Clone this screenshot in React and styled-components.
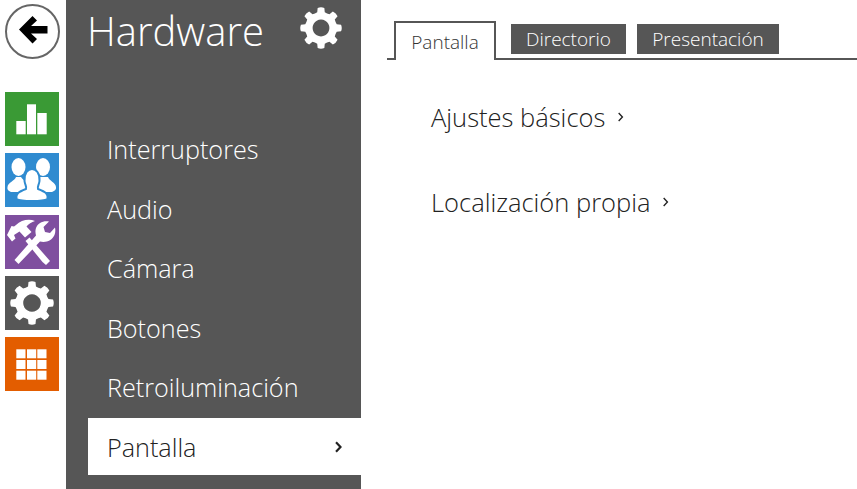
import React from 'react';
import styled, { createGlobalStyle } from 'styled-components';

const Global = createGlobalStyle`
  html, body { margin: 0; padding: 0; background: #fff; overflow: hidden; }
  body { font-family: "Open Sans", "Noto Sans", sans-serif; font-weight: 300; color: #222; }
`;

const Page = styled.div`
  display: flex;
  width: 857px;
  height: 489px;
`;
const Rail = styled.nav`
  width: 66px;
  flex: none;
  display: flex;
  flex-direction: column;
  padding: 4px 0 0 5px;
  box-sizing: border-box;
`;
const BackButton = styled.button`
  width: 55px;
  height: 55px;
  padding: 0;
  border: 2px solid #666;
  border-radius: 50%;
  background: #fff;
  display: flex;
  align-items: center;
  justify-content: center;
  box-sizing: border-box;
  margin-bottom: 33px;
`;
const Tile = styled.div`
  width: 54px;
  height: 54px;
  background: ${p => p.$bg};
  margin-bottom: 7.3px;
  & > svg { display: block; }
`;
const Sidebar = styled.aside`
  width: 295px;
  height: 489px;
  flex: none;
  background: #565656;
  display: flex;
  flex-direction: column;
  padding-left: 22px;
  box-sizing: border-box;
`;
const SideHead = styled.div`
  height: 119.5px;
  display: flex;
  align-items: flex-start;
  justify-content: space-between;
  padding: 4px 19px 0 0;
  box-sizing: border-box;
  color: #fff;
  & > svg { margin-top: 3px; }
`;
const SideTitle = styled.h1`
  margin: 0;
  font-size: 40px;
  line-height: 54px;
  font-weight: 300;
  margin-left: -1px;
`;
const NavList = styled.div`
  display: flex;
  flex-direction: column;
`;
const NavItem = styled.div`
  height: 59.5px;
  display: flex;
  align-items: center;
  justify-content: space-between;
  padding: 0 19px 0 19px;
  font-size: 25.2px;
  color: #fff;
  box-sizing: border-box;
`;
const ActiveItem = styled(NavItem)`
  height: 57px;
  margin-top: 1px;
  background: #fff;
  color: #222;
`;
const Main = styled.main`
  flex: 1;
  padding: 21px 0 0 26px;
  display: flex;
  flex-direction: column;
`;
const TabBar = styled.div`
  display: flex;
  align-items: flex-start;
  border-bottom: 2px solid #565656;
  padding-left: 7px;
  height: 37px;
`;
const ActiveTab = styled.div`
  width: 102px;
  height: 39px;
  box-sizing: border-box;
  border: 2px solid #565656;
  border-bottom: none;
  background: #fff;
  font-size: 19px;
  display: flex;
  align-items: center;
  justify-content: center;
  color: #333;
  margin-right: 15px;
`;
const Tab = styled.div`
  width: ${p => p.$w}px;
  height: 30px;
  margin: 3px ${p => p.$gap || 0}px 0 0;
  background: #565656;
  color: #fff;
  font-size: 19px;
  display: flex;
  align-items: center;
  justify-content: center;
`;
const Links = styled.div`
  display: flex;
  flex-direction: column;
  padding: 34px 0 0 44px;
  gap: 39px;
`;
const LinkRow = styled.div`
  display: flex;
  align-items: center;
  gap: 12px;
  height: 46px;
  font-size: 25.5px;
  color: #222;
`;

const gearPath = (() => {
  const pts = [];
  const n = 8;
  for (let i = 0; i < n; i++) {
    const a = (i * 2 * Math.PI) / n - Math.PI / 2;
    const w = Math.PI / n;
    const p = (r, t) => `${(50 + r * Math.cos(t)).toFixed(2)} ${(50 + r * Math.sin(t)).toFixed(2)}`;
    pts.push(`${i ? 'L' : 'M'}${p(38.5, a - w * 0.6)}`);
    pts.push(`L${p(48.5, a - w * 0.42)}`);
    pts.push(`Q${p(51, a)} ${p(48.5, a + w * 0.42)}`);
    pts.push(`L${p(38.5, a + w * 0.6)}`);
    const mid = a + w;
    pts.push(`Q${p(37, mid)} ${p(38.5, a + w * 1.4)}`);
  }
  return pts.join(' ') + ' Z M50 30 a20 20 0 1 0 0.01 0 Z';
})();

const Gear = ({ size }) => (
  <svg width={size} height={size} viewBox="0 0 100 100">
    <path d={gearPath} fill="#fff" fillRule="evenodd" />
  </svg>
);

const Chevron = ({ color = '#222', w = 1.6, h = 11 }) => (
  <svg width={h * 0.7} height={h} viewBox="0 0 7 11">
    <path d="M1.5 1.2 L5.6 5.5 L1.5 9.8" fill="none" stroke={color} strokeWidth={w} />
  </svg>
);

const items = ['Interruptores', 'Audio', 'Cámara', 'Botones', 'Retroiluminación'];

export default function App() {
  return (
    <Page>
      <Global />
      <Rail>
        <BackButton aria-label="Atrás">
          <svg width="51" height="51" viewBox="0 0 51 51">
            <path d="M12 23.500 L25.500 10 L30 14.500 L24 20 H40.500 V27.500 H24 L30 33 L25.500 37.500 Z" fill="#000" />
          </svg>
        </BackButton>
        <Tile $bg="#3a9a35">
          <svg width="54" height="54" viewBox="0 0 54 54" fill="#fff">
            <rect x="11.3" y="29" width="9.4" height="13.3" />
            <rect x="22" y="12.3" width="9" height="30" />
            <rect x="32.3" y="21" width="9.4" height="21.3" />
          </svg>
        </Tile>
        <Tile $bg="#2f8bd0">
          <svg width="54" height="54" viewBox="0 0 54 54">
            <g fill="#fff">
              <ellipse cx="13.5" cy="14" rx="7" ry="9" />
              <path d="M2.5 34 C3 29 10 28 11 24 H16 C18 28 24 29 25 33 L14 39 H6 C3 38 2 36 2.5 34 Z" />
              <ellipse cx="38" cy="14" rx="7" ry="9" />
              <path d="M51 34 C50.500 29 44 28 43 24 H35 C34 28 29 29 28 33 L39 39 H47 C50 38 51.500 36 51 34 Z" />
            </g>
            <g fill="#fff" stroke="#2f8bd0" strokeWidth="2">
              <path d="M11.500 46 C10.500 41 13 39 21 36 C22 34 20 32 19.500 28 C19 20 23 16 27 16 C31 16 35 20 34.500 28 C34 32 32 34 33 36 C41 39 43.500 41 42.500 46 C38 48.500 16 48.500 11.500 46 Z" />
            </g>
          </svg>
        </Tile>
        <Tile $bg="#7f4f9f">
          <svg width="54" height="54" viewBox="0 0 54 54" fill="#fff">
            <path d="M37.500 47 L41 50 L45 46 L24.500 22.500 L20.500 26 Z" />
            <path d="M2 20 L7 26.500 L10.500 23.500 L9 20 L14.500 16.500 L20 22.500 L26.500 17 L21.500 11.500 C23.500 9 26.500 7 30 6 C24 3.500 16 5 11 10 L9 11.500 L6.500 11 Z" />
            <path d="M9.500 45 L13.500 49 L35 26.500 C41 28 47 25.500 49.500 20 C50.500 17.500 50.500 15 50 12.500 L45 18 L40 17 L38.500 12 L44 6.500 C38 5.500 33 8 31 13 C30 16 30.500 18.500 31 20.500 Z" />
          </svg>
        </Tile>
        <Tile $bg="#565656">
          <svg width="54" height="54" viewBox="0 0 54 54">
            <svg x="5" y="5" width="44" height="44" viewBox="0 0 100 100">
              <path d={gearPath} fill="#fff" fillRule="evenodd" />
            </svg>
          </svg>
        </Tile>
        <Tile $bg="#e35d00">
          <svg width="54" height="54" viewBox="0 0 54 54" fill="#fff">
            {[12.300, 23, 33.700].map(y =>
              [11.300, 22, 32.300].map(x => <rect key={`${x}-${y}`} x={x} y={y} width="9.200" height="9" />)
            )}
          </svg>
        </Tile>
      </Rail>
      <Sidebar>
        <SideHead>
          <SideTitle>Hardware</SideTitle>
          <Gear size={42} />
        </SideHead>
        <NavList>
          {items.map(i => <NavItem key={i}>{i}</NavItem>)}
          <ActiveItem>
            Pantalla
            <Chevron w={2} h={12} />
          </ActiveItem>
        </NavList>
      </Sidebar>
      <Main>
        <TabBar>
          <ActiveTab>Pantalla</ActiveTab>
          <Tab $w={115} $gap={11}>Directorio</Tab>
          <Tab $w={142}>Presentación</Tab>
        </TabBar>
        <Links>
          <LinkRow>Ajustes básicos <Chevron h={10} w={1.500} /></LinkRow>
          <LinkRow>Localización propia <Chevron h={10} w={1.500} /></LinkRow>
        </Links>
      </Main>
    </Page>
  );
}
